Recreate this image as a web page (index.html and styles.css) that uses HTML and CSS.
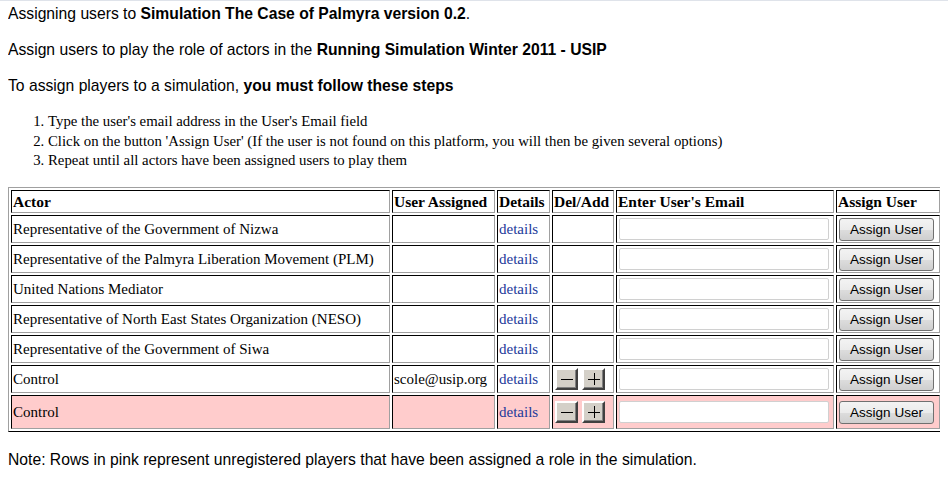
FILE: index.html
```html
<!DOCTYPE html>
<html>
<head>
<meta charset="utf-8">
<link rel="stylesheet" href="styles.css">
</head>
<body>
<p class="line">Assigning users to <b>Simulation The Case of Palmyra version 0.2</b>.</p>
<p class="line">Assign users to play the role of actors in the <b>Running Simulation Winter 2011 - USIP</b></p>
<p class="line">To assign players to a simulation, <b>you must follow these steps</b></p>
<ol class="steps">
  <li>Type the user's email address in the User's Email field</li>
  <li>Click on the button 'Assign User' (If the user is not found on this platform, you will then be given several options)</li>
  <li>Repeat until all actors have been assigned users to play them</li>
</ol>
<table class="grid">
  <colgroup>
    <col class="c-actor"><col class="c-user"><col class="c-det"><col class="c-del"><col class="c-mail"><col class="c-btn">
  </colgroup>
  <tr class="head">
    <th>Actor</th><th>User Assigned</th><th>Details</th><th>Del/Add</th><th>Enter User's Email</th><th>Assign User</th>
  </tr>
  <tr>
    <td>Representative of the Government of Nizwa</td><td></td><td><a class="det" href="#">details</a></td><td></td>
    <td><input class="mail" type="text"></td><td><button class="assign">Assign User</button></td>
  </tr>
  <tr>
    <td>Representative of the Palmyra Liberation Movement (PLM)</td><td></td><td><a class="det" href="#">details</a></td><td></td>
    <td><input class="mail" type="text"></td><td><button class="assign">Assign User</button></td>
  </tr>
  <tr>
    <td>United Nations Mediator</td><td></td><td><a class="det" href="#">details</a></td><td></td>
    <td><input class="mail" type="text"></td><td><button class="assign">Assign User</button></td>
  </tr>
  <tr>
    <td>Representative of North East States Organization (NESO)</td><td></td><td><a class="det" href="#">details</a></td><td></td>
    <td><input class="mail" type="text"></td><td><button class="assign">Assign User</button></td>
  </tr>
  <tr>
    <td>Representative of the Government of Siwa</td><td></td><td><a class="det" href="#">details</a></td><td></td>
    <td><input class="mail" type="text"></td><td><button class="assign">Assign User</button></td>
  </tr>
  <tr>
    <td>Control</td><td>scole@usip.org</td><td><a class="det" href="#">details</a></td>
    <td><div class="pm">
      <button class="sq" aria-label="Delete"><svg width="14" height="14" viewBox="0 0 14 14"><path d="M1 7.5h12" stroke="#000" stroke-width="1"/></svg></button>
      <button class="sq" aria-label="Add"><svg width="14" height="14" viewBox="0 0 14 14"><path d="M1 7.5h12M7.5 1v12" stroke="#000" stroke-width="1"/></svg></button>
    </div></td>
    <td><input class="mail" type="text"></td><td><button class="assign">Assign User</button></td>
  </tr>
  <tr class="pink">
    <td>Control</td><td></td><td><a class="det" href="#">details</a></td>
    <td><div class="pm">
      <button class="sq" aria-label="Delete"><svg width="14" height="14" viewBox="0 0 14 14"><path d="M1 7.5h12" stroke="#000" stroke-width="1"/></svg></button>
      <button class="sq" aria-label="Add"><svg width="14" height="14" viewBox="0 0 14 14"><path d="M1 7.5h12M7.5 1v12" stroke="#000" stroke-width="1"/></svg></button>
    </div></td>
    <td><input class="mail" type="text"></td><td><button class="assign">Assign User</button></td>
  </tr>
</table>
<p class="line note">Note: Rows in pink represent unregistered players that have been assigned a role in the simulation.</p>
</body>
</html>
```
FILE: styles.css
```css
html {
  background: #fff;
  border-top: 1px solid #dfe3ea;
}
body {
  margin: 3px 8px 8px 8px;
  font-family: "Liberation Sans", Arial, sans-serif;
  font-size: 15.7px;
  color: #000;
}
.line {
  margin: 0 0 16px 0;
  line-height: 20px;
}
.steps {
  margin: 16px 0 16px 0;
  padding-left: 40px;
  font-family: "Liberation Serif", "Times New Roman", serif;
  font-size: 14.8px;
  line-height: 19.5px;
}
.grid {
  table-layout: fixed;
  width: 934px;
  border-collapse: separate;
  border-spacing: 2px;
  border: 1px solid;
  border-color: #a0a0a0 #000 #000 #a0a0a0;
  font-family: "Liberation Serif", "Times New Roman", serif;
  font-size: 15px;
  margin: 2px 0 18px 0;
}
.grid th,
.grid td {
  border: 1px solid;
  border-color: #000 #a0a0a0 #a0a0a0 #000;
  padding: 1px;
  text-align: left;
  vertical-align: middle;
  white-space: nowrap;
  overflow: hidden;
}
.grid th {
  font-weight: bold;
  font-size: 15.5px;
  height: 19px;
  line-height: 19px;
}
.grid td {
  height: 24px;
  line-height: 18px;
}
.grid .pink td {
  background: #ffcccc;
  height: 30px;
}
.c-actor { width: 379px; }
.c-user { width: 103px; }
.c-det { width: 53px; }
.c-del { width: 62px; }
.c-mail { width: 218px; }
.c-btn { width: 104px; }
.det {
  color: #22399a;
  text-decoration: none;
}
.mail {
  display: block;
  box-sizing: border-box;
  width: 210px;
  height: 22px;
  margin: 0 0 0 1px;
  border: 1px solid #d0d0d0;
  border-radius: 2px;
  background: #fff;
  padding: 0 2px;
}
.assign {
  display: block;
  box-sizing: border-box;
  width: 95px;
  height: 23px;
  margin: 1px 0 0 1px;
  padding: 0;
  border: 1px solid #707070;
  border-radius: 3px;
  background: linear-gradient(#f3f3f3 0%, #ebebeb 50%, #dddddd 51%, #cfcfcf 100%);
  font-family: "Liberation Sans", Arial, sans-serif;
  font-size: 13.5px;
  color: #000;
}
.pm {
  display: flex;
  gap: 4px;
  padding-left: 1px;
}
.sq {
  box-sizing: border-box;
  width: 23px;
  height: 22px;
  padding: 0;
  border: 2px solid;
  border-color: #ffffff #404040 #404040 #ffffff;
  box-shadow: inset -1px -1px 0 #808080;
  background: #d4d0c8;
  display: flex;
  align-items: center;
  justify-content: center;
}
.sq svg {
  display: block;
}
.note {
  margin-top: 0;
}
```
